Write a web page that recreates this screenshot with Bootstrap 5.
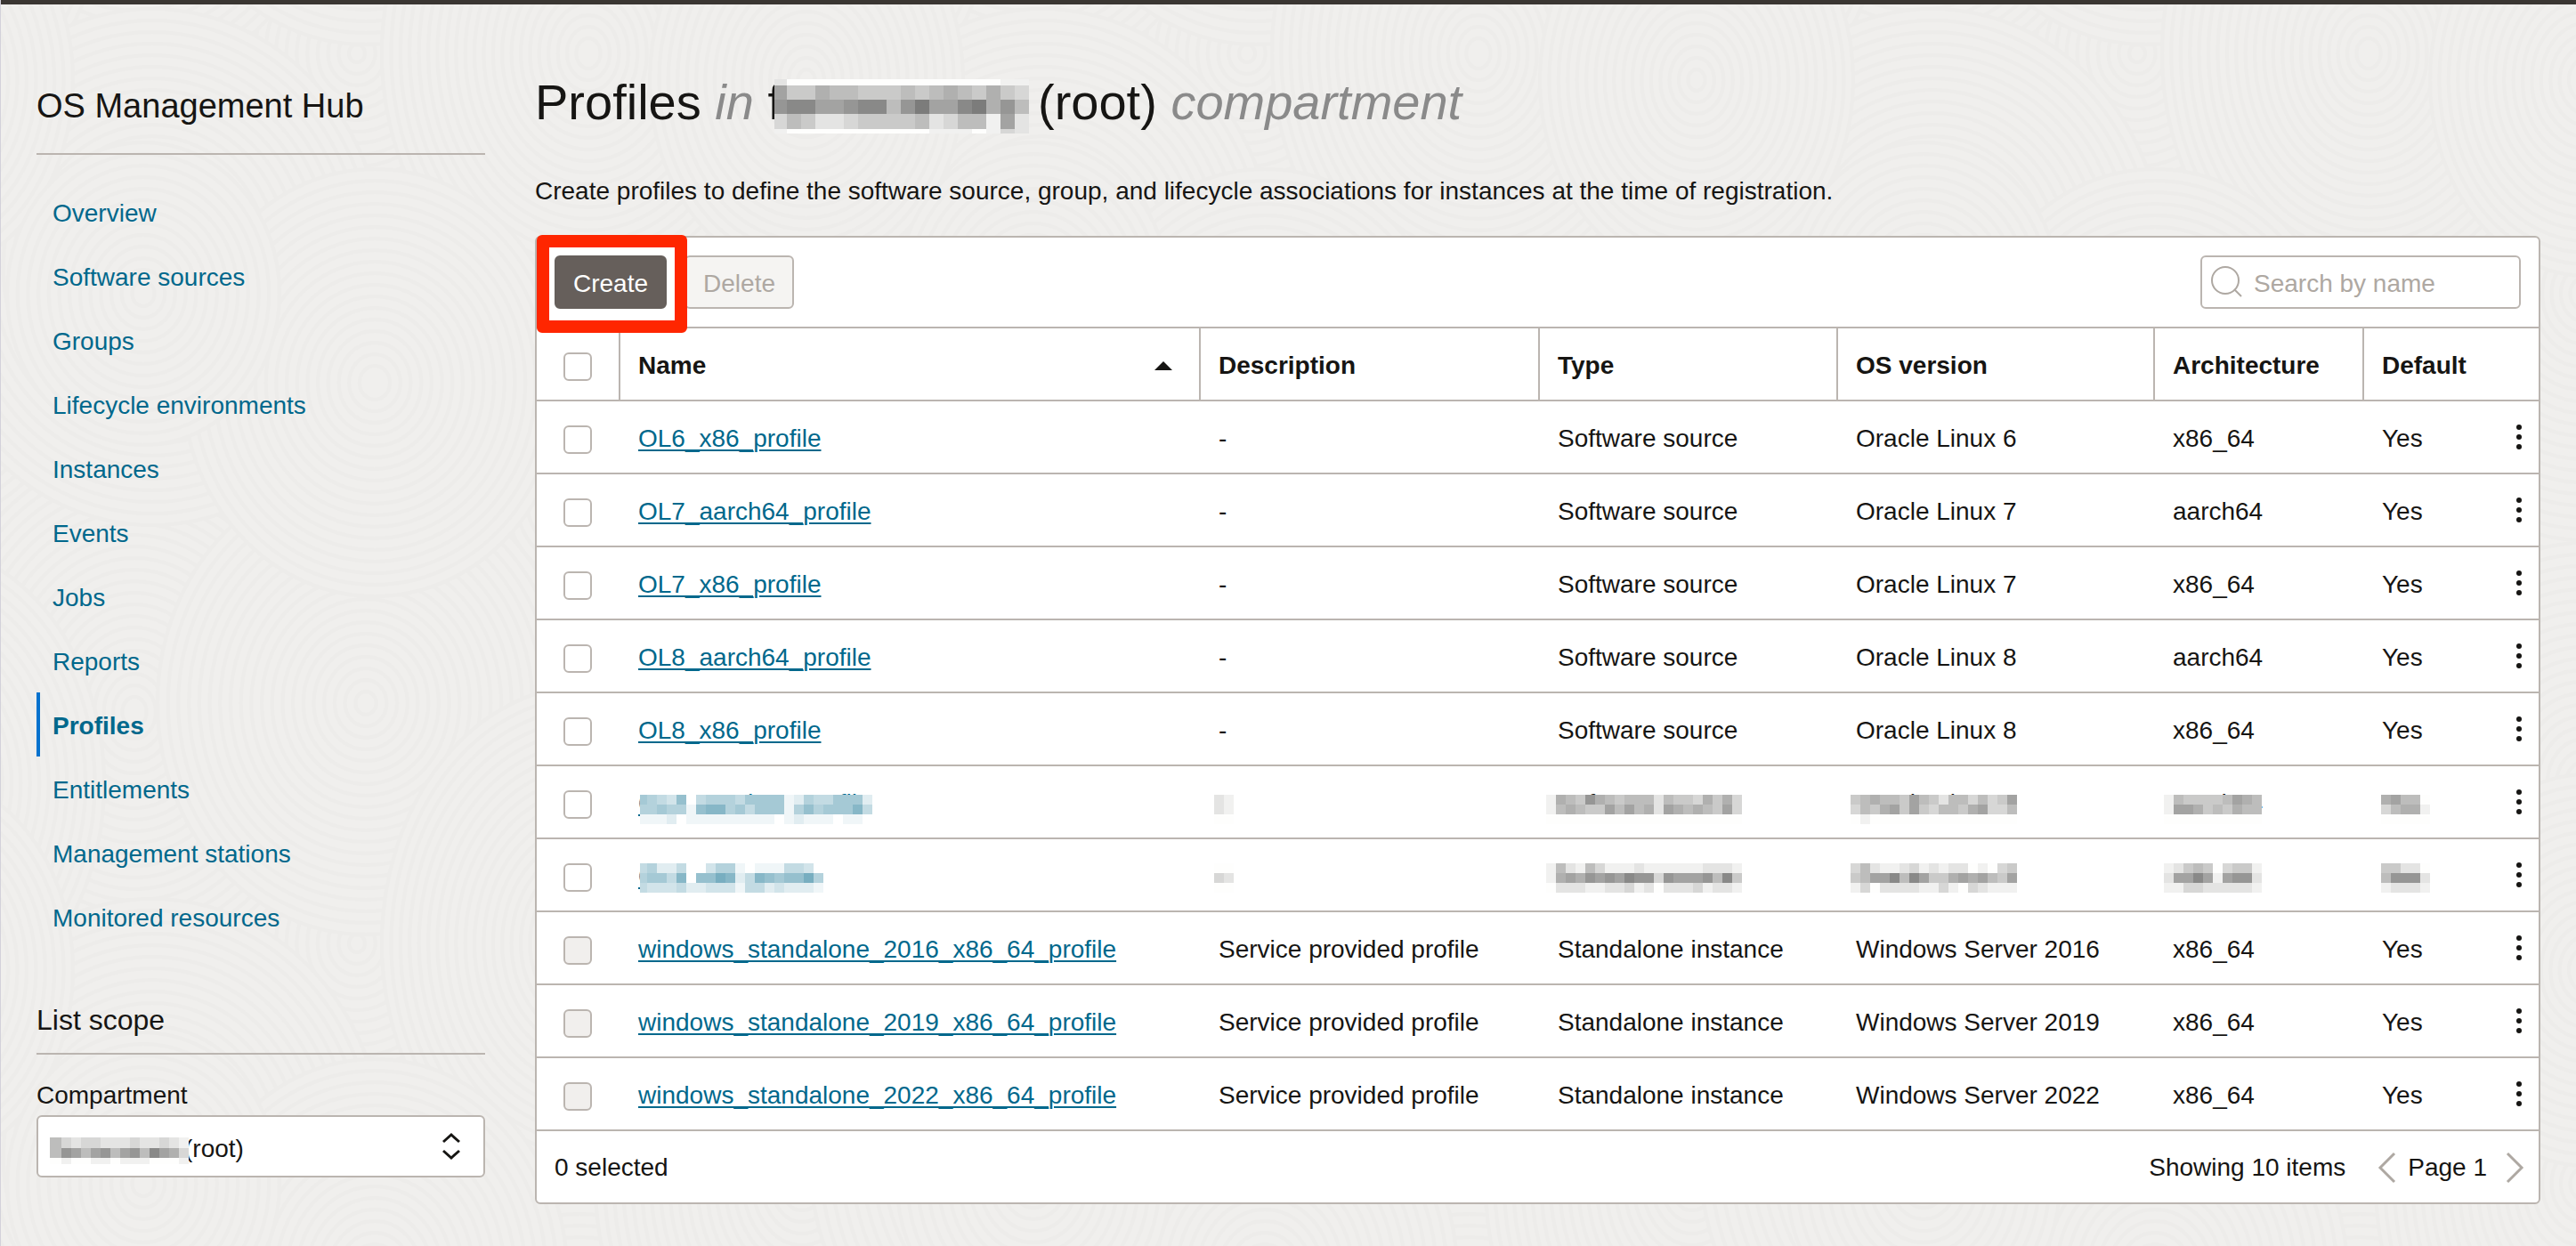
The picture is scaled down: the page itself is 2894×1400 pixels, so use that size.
<!DOCTYPE html>
<html lang="en">
<head>
<meta charset="utf-8">
<meta name="viewport" content="width=device-width, initial-scale=1">
<title>Profiles - OS Management Hub</title>
<link href="https://cdn.jsdelivr.net/npm/bootstrap@5.3.0/dist/css/bootstrap.min.css" rel="stylesheet">
<style>
:root { --ink: #161513; --line: #bbb5b0; --muted: #aea8a2; --link: #00688c; }
body { font-family: "Liberation Sans", Arial, sans-serif; font-size: 28px; line-height: 36px; color: var(--ink); background: #f0efed; min-height: 100vh; position: relative; border-left: 1px solid #d3d1da; }
.backdrop { position: absolute; inset: 0; width: 100%; height: 100%; z-index: -1; }
.topbar { height: 5px; background: #3a3632; }
.page-shell { gap: 56px; padding: 0 40px; }
.side-panel { width: 504px; padding-top: 90px; }
.side-title { font-size: 38px; line-height: 48px; font-weight: 400; padding-bottom: 29px; border-bottom: 2px solid var(--line); margin: 0 0 28px; }
.side-panel .nav-link { height: 72px; padding: 20px 0 16px 14px; border-left: 4px solid transparent; color: var(--link); }
.side-panel .nav-link.active { border-left-color: #0572ce; font-weight: 700; }
.scope-title { font-size: 32px; line-height: 40px; font-weight: 400; margin: 60px 0 28px; padding-bottom: 17px; border-bottom: 2px solid var(--line); }
.scope-label { margin-bottom: 4px; }
.scope-select { height: 70px; border: 2px solid var(--line); border-radius: 6px; font-size: 28px; line-height: 36px; color: var(--ink); padding: 18px 60px 12px 164px; background: #fff; }
.select-arrows { position: absolute; right: 26px; top: 19px; pointer-events: none; }
.main-panel { padding-top: 78px; min-width: 0; }
.page-title { font-size: 56px; line-height: 64px; font-weight: 400; margin: 0 0 50px; }
.page-title em { color: #8a8a8a; }
.hidden-name { display: inline-block; position: relative; width: 288px; }
.intro { margin: 0 0 32px; }
.panel { background: #fff; border: 2px solid var(--line); border-radius: 6px; }
.tool-row { padding: 20px; border-bottom: 2px solid var(--line); position: relative; gap: 20px; z-index: 2; }
.tool-row .btn { height: 60px; padding: 13px 19px 9px; font-size: 28px; line-height: 34px; border: 2px solid; border-radius: 6px; }
.btn-create { background: #665f5b; color: #fff; border-color: #665f5b !important; }
.btn-delete:disabled { background: #f5f4f2; color: var(--muted); border-color: var(--line) !important; opacity: 1; }
.callout-box { position: absolute; left: 0; top: -3px; width: 169px; height: 110px; border: 14px solid #ff2600; border-radius: 6px; pointer-events: none; }
.search-box { width: 360px; position: relative; }
.search-box .form-control { height: 60px; font-size: 28px; line-height: 36px; border: 2px solid var(--line); border-radius: 6px; padding: 12px 10px 8px 58px; }
.search-box .form-control::placeholder { color: var(--muted); }
.search-box svg { position: absolute; left: 12px; top: 12px; }
.profile-table { border-collapse: separate; border-spacing: 0; table-layout: fixed; margin: 0; width: 100%; --bs-table-bg: transparent; }
.profile-table > :not(caption) > * > * { height: 82px; padding: 4px 0 0 20px; vertical-align: middle; border: 0; border-bottom: 2px solid var(--line); color: var(--ink); position: relative; white-space: nowrap; }
.profile-table > thead > tr > th { border-right: 2px solid var(--line); font-weight: 700; }
.profile-table > thead > tr > th:last-child { border-right: 0; }
.profile-table > :not(caption) > * > .pick-cell { padding: 6px 0 0 30px; }
.profile-table > :not(caption) > * > .menu-cell { padding: 0; }
.w-pick { width: 94px; } .w-desc { width: 381px; } .w-type { width: 335px; } .w-os { width: 356px; } .w-arch { width: 235px; } .w-def { width: 120px; } .w-menu { width: 76px; }
.profile-table a { color: var(--link); text-decoration: underline; text-decoration-thickness: 2px; text-underline-offset: 3px; }
.pick-cell .form-check-input { display: block; width: 32px; height: 32px; margin: 0; border: 2px solid var(--line); border-radius: 6px; background-color: #fff; }
.pick-cell .form-check-input:disabled { background-color: #f1efed; opacity: 1; }
.sort-mark { width: 0; height: 0; border: 10px solid transparent; border-top: 0; border-bottom: 10px solid var(--ink); margin-right: 30px; }
.row-menu { display: block; border: 0; background: none; padding: 0; margin-left: auto; margin-right: 12px; width: 20px; height: 40px; }
.row-menu svg { display: block; margin: 5px auto; }
.foot-row { height: 80px; padding: 2px 16px 0 20px; }
.foot-row button { border: 0; background: none; padding: 0; line-height: 0; }
.page-prev { margin: 0 12px 0 36px; } .page-next { margin-left: 20px; }
.mosaic { position: absolute; z-index: 1; }
.m-title { left: 8px; top: 6px; }
.m-select { left: 15px; top: 25px; }
.m-upper { top: 32px; } .m-lower { top: 27px; }
.m-name { left: 22px; } .m-desc { left: 15px; } .m-type { left: 7px; } .m-os { left: 14px; } .m-arch { left: 10px; } .m-def { left: 19px; }
</style>
<script src="https://cdn.jsdelivr.net/npm/bootstrap@5.3.0/dist/js/bootstrap.bundle.min.js"></script>
</head>
<body>
<svg class="backdrop" aria-hidden="true"><defs><pattern id="swirl" width="1000" height="1000" patternUnits="userSpaceOnUse"></pattern></defs><rect width="100%" height="100%" fill="url(#swirl)"/></svg>
<div class="topbar"></div>
<div class="page-shell d-flex align-items-start">
  <aside class="side-panel flex-shrink-0">
    <h2 class="side-title">OS Management Hub</h2>
    <nav class="nav flex-column" aria-label="OS Management Hub">
      <a class="nav-link" href="#">Overview</a>
      <a class="nav-link" href="#">Software sources</a>
      <a class="nav-link" href="#">Groups</a>
      <a class="nav-link" href="#">Lifecycle environments</a>
      <a class="nav-link" href="#">Instances</a>
      <a class="nav-link" href="#">Events</a>
      <a class="nav-link" href="#">Jobs</a>
      <a class="nav-link" href="#">Reports</a>
      <a class="nav-link active" aria-current="page" href="#">Profiles</a>
      <a class="nav-link" href="#">Entitlements</a>
      <a class="nav-link" href="#">Management stations</a>
      <a class="nav-link" href="#">Monitored resources</a>
    </nav>
    <h3 class="scope-title">List scope</h3>
    <label class="scope-label d-block" for="compartment">Compartment</label>
    <div class="position-relative">
      <select id="compartment" class="form-select scope-select"><option>(root)</option></select>
      <svg class="mosaic m-select" data-first="13" data-cell="11" data-heights="12,11,7" data-rows="53233222322321,58757857859763,01001101110001"></svg>
      <svg class="select-arrows" width="24" height="32" viewBox="0 0 24 32" fill="none" stroke="#161513" stroke-width="3"><path d="M3 11l9-8 9 8M3 21l9 8 9-8"/></svg>
    </div>
  </aside>

  <main class="main-panel flex-grow-1">
    <h1 class="page-title">Profiles <em>in</em> <span class="hidden-name">f<svg class="mosaic m-title" data-first="14" data-cell="16" data-heights="7,16,16,17,5" data-rows="200000000000000011,744655444545654643,8997789958A779A685,354223444452355172,100000000001110132"></svg></span> (root) <em>compartment</em></h1>
    <p class="intro">Create profiles to define the software source, group, and lifecycle associations for instances at the time of registration.</p>
    <section class="panel">
      <div class="tool-row d-flex align-items-center">
        <button type="button" class="btn btn-create">Create</button>
        <button type="button" class="btn btn-delete" disabled>Delete</button>
        <div class="callout-box"></div>
        <div class="search-box ms-auto">
          <input id="search" class="form-control" type="text" placeholder="Search by name" aria-label="Search by name">
          <svg width="36" height="36" viewBox="0 0 36 36" fill="none" stroke="#aea8a2" stroke-width="2"><circle cx="16" cy="16" r="15"/><path d="M26 26l8 8"/></svg>
        </div>
      </div>
      <table class="table profile-table">
        <colgroup><col class="w-pick"><col><col class="w-desc"><col class="w-type"><col class="w-os"><col class="w-arch"><col class="w-def"><col class="w-menu"></colgroup>
        <thead><tr>
          <th class="pick-cell"><input class="form-check-input" type="checkbox" aria-label="Select all"></th>
          <th><div class="d-flex align-items-center justify-content-between">Name<span class="sort-mark"></span></div></th>
          <th>Description</th><th>Type</th><th>OS version</th><th>Architecture</th><th colspan="2">Default</th>
        </tr></thead>
        <tbody id="profiles"></tbody>
      </table>
      <div class="foot-row d-flex align-items-center">
        <span>0 selected</span>
        <span class="ms-auto">Showing 10 items</span>
        <button type="button" class="page-prev" aria-label="Previous page"><svg width="22" height="36" viewBox="0 0 22 36" fill="none" stroke="#aea8a2" stroke-width="3"><path d="M19 2L3 18l16 16"/></svg></button>
        <span>Page 1</span>
        <button type="button" class="page-next" aria-label="Next page"><svg width="22" height="36" viewBox="0 0 22 36" fill="none" stroke="#aea8a2" stroke-width="3"><path d="M3 2l16 16L3 34"/></svg></button>
      </div>
    </section>
  </main>
</div>
<script>
const NS = 'http://www.w3.org/2000/svg';
const cols = ['name', 'desc', 'type', 'os', 'arch', 'def'];
const rows = [
  ['OL6_x86_profile', '-', 'Software source', 'Oracle Linux 6', 'x86_64'],
  ['OL7_aarch64_profile', '-', 'Software source', 'Oracle Linux 7', 'aarch64'],
  ['OL7_x86_profile', '-', 'Software source', 'Oracle Linux 7', 'x86_64'],
  ['OL8_aarch64_profile', '-', 'Software source', 'Oracle Linux 8', 'aarch64'],
  ['OL8_x86_profile', '-', 'Software source', 'Oracle Linux 8', 'x86_64'],
  ['OL9_aarch64_profile', '', 'Software source', 'Oracle Linux 9', 'aarch64'],
  ['OL9_x86_profile', '', '', '', ''],
  ['windows_standalone_2016_x86_64_profile', 'Service provided profile', 'Standalone instance', 'Windows Server 2016', 'x86_64'],
  ['windows_standalone_2019_x86_64_profile', 'Service provided profile', 'Standalone instance', 'Windows Server 2019', 'x86_64'],
  ['windows_standalone_2022_x86_64_profile', 'Service provided profile', 'Standalone instance', 'Windows Server 2022', 'x86_64']
];
// darkness levels of the redacted cells, one digit per block
const masked = {
  5: ['654370455546666125446662,556551788564666157566684,111201111111110121110110',
      '21,21,00', '16548654555254436463,15654475756276565473,00000000000000000000',
      '45655475425535347,35467474355467335,01000000000000000', '1544445765,1776454655,0000000000', '67550,35661,00000'],
  6: ['4522400355101114430,5664807798248767795,4333422333144232221',
      '00,32,00', '15215311121111112221,16768787988387778594,02221122312022231221',
      '35211231212201034,45779597446767547,13022221131032111', '1245403441,2779717882,1133222221', '44220,58882,12221']
};
document.getElementById('profiles').innerHTML = rows.map((r, i) => {
  const cells = [...r, i === 6 ? '' : 'Yes'].map((t, c) => {
    const body = c === 0 ? `<a href="#">${t}</a>` : t;
    const cover = masked[i] ? `<svg class="mosaic m-${cols[c]} ${i === 5 ? 'm-upper' : 'm-lower'}" data-first="${c ? 11 : 8}" data-cell="11" data-heights="11,11,11" data-rows="${masked[i][c]}"${c ? '' : ' data-tint="1"'}></svg>` : '';
    return `<td>${body}${cover}</td>`;
  }).join('');
  return `<tr><td class="pick-cell"><input class="form-check-input" type="checkbox" aria-label="Select row"${i > 6 ? ' disabled' : ''}></td>${cells}<td class="menu-cell"><button type="button" class="row-menu" aria-label="Row actions"><svg width="8" height="30" fill="#161513"><circle cx="4" cy="4" r="3"/><circle cx="4" cy="15" r="3"/><circle cx="4" cy="26" r="3"/></svg></button></td></tr>`;
}).join('');

function rect(x, y, w, h, fill) {
  const r = document.createElementNS(NS, 'rect');
  for (const [k, v] of Object.entries({ x, y, width: w, height: h, fill })) r.setAttribute(k, v);
  return r;
}
document.querySelectorAll('.mosaic').forEach(svg => {
  const { first, cell, heights, rows, tint } = svg.dataset;
  const lines = rows.split(','), hs = heights.split(',').map(Number);
  const f = +first, s = +cell;
  let y = 0;
  lines.forEach((line, i) => {
    [...line].forEach((d, j) => {
      const n = parseInt(d, 16);
      const fill = tint ? `rgb(${255 - 15 * n},${255 - 9 * n},${255 - 7 * n})` : `rgb(${254 - 13 * n},${254 - 13 * n},${253 - 13 * n})`;
      svg.append(rect(j ? f + (j - 1) * s : 0, y, j ? s : f, hs[i], fill));
    });
    y += hs[i];
  });
  svg.setAttribute('width', f + (lines[0].length - 1) * s);
  svg.setAttribute('height', y);
  svg.setAttribute('shape-rendering', 'crispEdges');
});

// overlapping ring groups, wrapped at the tile edges
const swirl = document.getElementById('swirl');
const discs = [[650, 560, 300], [900, 330, 290], [400, 60, 270], [150, 800, 290], [410, 790, 260], [900, 880, 270], [170, 300, 290], [660, 60, 290], [420, 430, 240], [905, 90, 220], [160, 330, 170]];
discs.forEach(([cx, cy, r], k) => {
  for (const dx of [-1000, 0, 1000]) for (const dy of [-1000, 0, 1000]) {
    if (cx + dx + r < 0 || cx + dx - r > 1000 || cy + dy + r < 0 || cy + dy - r > 1000) continue;
    for (let q = r; q > 8; q -= 13) {
      const e = document.createElementNS(NS, 'ellipse');
      const a = { cx: cx + dx, cy: cy + dy, rx: q * (k % 2 ? 0.8 : 0.9), ry: q, fill: '#f0efed', stroke: '#edecea', 'stroke-width': 4 };
      for (const p in a) e.setAttribute(p, a[p]);
      swirl.append(e);
    }
  }
});
</script>
</body>
</html>
